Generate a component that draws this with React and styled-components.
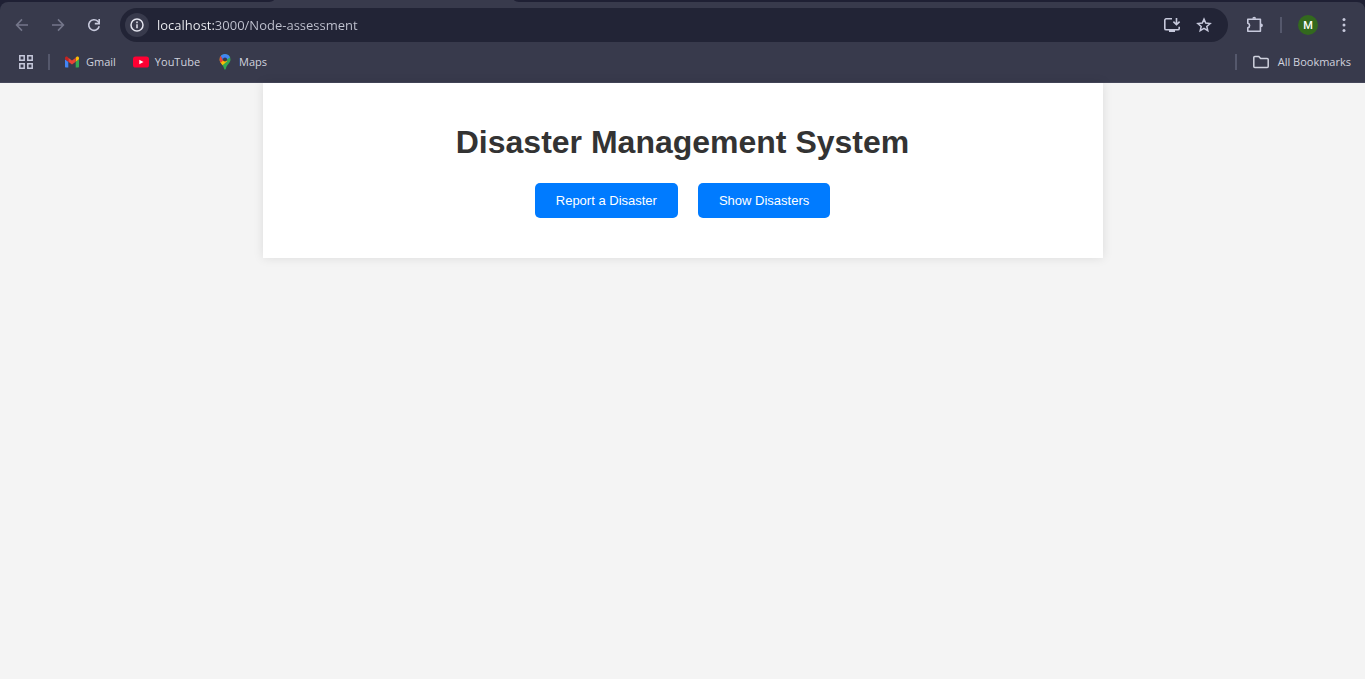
import React from "react";
import styled, { createGlobalStyle } from "styled-components";

const colors = {
  frame: "#1f2034",
  toolbar: "#383a4c",
  omnibox: "#222436",
  chip: "#383a4c",
  divider: "#55586c",
  icon: "#c7c9dc",
  dim: "#74768a",
  text: "#d0d2de",
};

const GlobalStyle = createGlobalStyle`
  *, *::before, *::after { box-sizing: border-box; }
  body { margin: 0; background: #f4f4f4; font-family: "Liberation Sans", Arial, sans-serif; }
  svg { display: block; flex: none; }
`;

const Page = styled.div`
  min-height: 100vh;
`;

const Browser = styled.header`
  background: ${colors.frame};
  font-family: "Segoe UI", "Open Sans", sans-serif;
`;

const TabStrip = styled.div`
  display: flex;
  height: 2px;
  background: ${colors.toolbar};
`;

const TabGap = styled.div`
  background: ${colors.frame};
  width: ${(p) => (p.$fill ? "auto" : "274px")};
  flex: ${(p) => (p.$fill ? "1" : "none")};
  border-radius: ${(p) => (p.$fill ? "0 0 0 8px / 0 0 0 2px" : "0 0 8px 0 / 0 0 2px 0")};
`;

const ActiveTab = styled.div`
  width: 240px;
`;

const Chrome = styled.div`
  background: ${colors.toolbar};
  border-radius: 8px 8px 0 0;
  border-bottom: 1px solid #45475a;
`;

const Toolbar = styled.div`
  display: flex;
  align-items: center;
  height: 46px;
  padding: 0 12px 0 4px;
`;

const IconButton = styled.button`
  display: flex;
  align-items: center;
  justify-content: center;
  width: ${(p) => p.$size || 36}px;
  height: ${(p) => p.$size || 36}px;
  flex: none;
  padding: 0;
  border: 0;
  border-radius: 50%;
  background: ${(p) => (p.$chip ? colors.chip : "transparent")};
  color: ${(p) => (p.$dim ? colors.dim : colors.icon)};
`;

const Omnibox = styled.div`
  display: flex;
  align-items: center;
  flex: 1;
  height: 34px;
  margin: 0 9px 0 8px;
  padding: 0 8px 0 5px;
  border-radius: 17px;
  background: ${colors.omnibox};
`;

const UrlInput = styled.input`
  flex: 1;
  min-width: 0;
  margin-left: 8px;
  padding: 0;
  border: 0;
  outline: 0;
  background: linear-gradient(90deg, #f1f2f6 58px, #c3c5d2 58px);
  background-clip: text;
  -webkit-background-clip: text;
  color: transparent;
  font: 13px/20px "Segoe UI", "Open Sans", sans-serif;
`;

const Divider = styled.span`
  width: 2px;
  height: 16px;
  flex: none;
  margin: ${(p) => p.$margin};
  background: ${colors.divider};
`;

const Avatar = styled.button`
  width: 20px;
  height: 20px;
  flex: none;
  margin: 0 17px 0 16px;
  padding: 0;
  border: 0;
  border-radius: 50%;
  background: #33691e;
  color: #fff;
  font: 500 11px/22px Roboto, sans-serif;
`;

const BookmarkBar = styled.nav`
  display: flex;
  align-items: center;
  height: 34px;
  padding: 0 14px 6px 12px;
`;

const Bookmark = styled.a`
  display: flex;
  align-items: center;
  gap: 6px;
  margin-right: 17px;
  color: ${colors.text};
  font-size: 11px;
  line-height: 16px;
  text-decoration: none;
`;

const AllBookmarks = styled.button`
  display: flex;
  align-items: center;
  gap: 8px;
  padding: 0;
  border: 0;
  background: transparent;
  color: ${colors.text};
  font: 11px/16px "Segoe UI", "Open Sans", sans-serif;
`;

const Spacer = styled.span`
  flex: 1;
`;

const Card = styled.main`
  max-width: 840px;
  margin: 0 auto;
  padding: 40px 20px;
  background: #fff;
  box-shadow: 0 0 10px rgba(0, 0, 0, 0.1);
  text-align: center;
`;

const Title = styled.h1`
  margin: 0 0 22px;
  color: #333;
  font-size: 32px;
  line-height: 38px;
`;

const Actions = styled.div`
  display: flex;
  justify-content: center;
  gap: 20px;
`;

const ActionButton = styled.button`
  padding: 10px 21px;
  border: 0;
  border-radius: 5px;
  background: #007bff;
  color: #fff;
  font: 13px/15px "Liberation Sans", Arial, sans-serif;
  cursor: pointer;
`;

const stroke = { fill: "none", stroke: "currentColor", strokeWidth: 1.6 };

const BackIcon = () => (
  <svg width="16" height="16" viewBox="0 0 16 16" {...stroke}>
    <path d="M14 8H3M8 2.4 2.6 8 8 13.6" />
  </svg>
);
const ForwardIcon = () => (
  <svg width="16" height="16" viewBox="0 0 16 16" {...stroke}>
    <path d="M2 8h11M8 2.4 13.4 8 8 13.6" />
  </svg>
);
const ReloadIcon = () => (
  <svg width="16" height="16" viewBox="0 0 16 16" {...stroke}>
    <path d="M13.2 9.2A5.3 5.3 0 1 1 11.8 4.300L13.200 5.800" />
    <path d="M13.2 2v4.600H8.800" />
  </svg>
);
const InfoIcon = () => (
  <svg width="16" height="16" viewBox="0 0 16 16" fill="none" stroke="#e3e4ee" strokeWidth="1.5">
    <circle cx="8" cy="8" r="6" />
    <path d="M8 7.2v4M8 4.6v1.6" />
  </svg>
);
const InstallIcon = () => (
  <svg width="18" height="18" viewBox="0 0 18 18" {...stroke}>
    <path d="M9 2.8H3.2a1.4 1.4 0 0 0-1.4 1.4v8.2a1.4 1.4 0 0 0 1.4 1.4h11.6a1.4 1.4 0 0 0 1.4-1.4v-1.6" />
    <path d="M13.500 2v6.500M10.400 5.600l3.100 3.100 3.100-3.100" />
    <path d="M6 15h6" strokeWidth="2" />
  </svg>
);
const StarIcon = () => (
  <svg width="16" height="16" viewBox="0 0 16 16" {...stroke} strokeWidth="1.5">
    <path d="m8 2.1 1.7 4 4.4.4-3.3 2.9 1 4.3L8 11.4l-3.8 2.3 1-4.3L1.9 6.5l4.4-.4z" />
  </svg>
);
const PuzzleIcon = () => (
  <svg width="18" height="18" viewBox="0 0 18 18" {...stroke}>
    <path d="M1.800 3.200h12.600v12H1.800v-3.400c2.400-.6 2.400-4 0-4.600z" strokeLinejoin="round" />
    <path d="M6.300 2.800a1.900 2 0 0 1 3.800 0zM14.900 7.400a2 1.900 0 0 1 0 3.800z" fill="currentColor" stroke="none" />
  </svg>
);
const MoreIcon = () => (
  <svg width="16" height="16" viewBox="0 0 16 16" fill="currentColor">
    <circle cx="8" cy="2.5" r="1.5" />
    <circle cx="8" cy="8" r="1.5" />
    <circle cx="8" cy="13.5" r="1.5" />
  </svg>
);
const AppsIcon = () => (
  <svg width="16" height="16" viewBox="0 0 16 16" {...stroke} strokeWidth="1.5">
    <path d="M1.8 1.8h4.4v4.4H1.8zM9.8 1.8h4.4v4.4H9.8zM1.8 9.8h4.4v4.4H1.8zM9.8 9.8h4.4v4.4H9.8z" />
  </svg>
);
const FolderIcon = () => (
  <svg width="18" height="16" viewBox="0 0 18 16" {...stroke} strokeWidth="1.5">
    <path d="M1.8 3.6a1 1 0 0 1 1-1h4l1.8 2h6.6a1 1 0 0 1 1 1v7a1 1 0 0 1-1 1H2.8a1 1 0 0 1-1-1z" />
  </svg>
);
const GmailIcon = () => (
  <svg width="16" height="16" viewBox="0 0 16 16">
    <path fill="#4285f4" d="M2 13.4h2.3V7.8L1 5.3v7.1c0 .6.4 1 1 1z" />
    <path fill="#34a853" d="M11.7 13.4H14c.6 0 1-.4 1-1V5.3l-3.3 2.5z" />
    <path fill="#fbbc04" d="M11.7 3.7v4.1L15 5.3V4c0-1.3-1.4-2-2.4-1.2z" />
    <path fill="#ea4335" d="M4.3 7.8V3.7L8 6.5l3.7-2.8v4.1L8 10.6z" />
    <path fill="#c5221f" d="M1 4v1.3l3.3 2.5V3.7l-.9-.9C2.4 2 1 2.7 1 4z" />
  </svg>
);
const YouTubeIcon = () => (
  <svg width="16" height="16" viewBox="0 0 16 16">
    <rect x="0" y="2.4" width="16" height="11.2" rx="2.6" fill="#ff0033" />
    <path d="m6.3 5.7 4.2 2.3-4.2 2.3z" fill="#fff" />
  </svg>
);
const MapsIcon = () => (
  <svg width="16" height="16" viewBox="0 0 16 16">
    <defs>
      <clipPath id="pin">
        <path d="M8 0a5.5 5.5 0 0 1 5.5 5.5c0 3.6-3.6 4.7-4.6 9.1-.3 1.4-1.5 1.4-1.8 0C6.1 10.2 2.5 9.1 2.5 5.5A5.5 5.5 0 0 1 8 0z" />
      </clipPath>
    </defs>
    <g clipPath="url(#pin)">
      <path fill="#34a853" d="M0 0h16v16H0z" />
      <path fill="#fbbc04" d="M2 9.8 8 3l2.2 4.2L4.6 12z" />
      <path fill="#ea4335" d="M1 1.5h3L8 5 3 9.6H1z" />
      <path fill="#1a73e8" d="M3.6 1.8 7 5l-1 1.2z" />
      <path fill="#4285f4" d="M3.5 0H12l1 3.2L8 7 3.8 2z" />
    </g>
    <circle cx="8" cy="5.5" r="2.1" fill="#383a4c" />
  </svg>
);

export default function App() {
  return (
    <Page>
      <GlobalStyle />
      <Browser>
        <TabStrip>
          <TabGap />
          <ActiveTab />
          <TabGap $fill />
        </TabStrip>
        <Chrome>
          <Toolbar>
            <IconButton $dim aria-label="Back"><BackIcon /></IconButton>
            <IconButton $dim aria-label="Forward"><ForwardIcon /></IconButton>
            <IconButton aria-label="Reload"><ReloadIcon /></IconButton>
            <Omnibox>
              <IconButton $size={24} $chip aria-label="Site information"><InfoIcon /></IconButton>
              <UrlInput aria-label="Address" defaultValue="localhost:3000/Node-assessment" />
              <IconButton $size={32} aria-label="Install app"><InstallIcon /></IconButton>
              <IconButton $size={32} aria-label="Bookmark this page"><StarIcon /></IconButton>
            </Omnibox>
            <IconButton aria-label="Extensions"><PuzzleIcon /></IconButton>
            <Divider $margin="0 0 0 7px" />
            <Avatar aria-label="Profile">M</Avatar>
            <IconButton $size={18} aria-label="Menu"><MoreIcon /></IconButton>
          </Toolbar>
          <BookmarkBar aria-label="Bookmarks">
            <IconButton $size={28} aria-label="Apps"><AppsIcon /></IconButton>
            <Divider $margin="0 14px 0 8px" />
            <Bookmark href="#gmail"><GmailIcon />Gmail</Bookmark>
            <Bookmark href="#youtube"><YouTubeIcon />YouTube</Bookmark>
            <Bookmark href="#maps"><MapsIcon />Maps</Bookmark>
            <Spacer />
            <Divider $margin="0 15px 0 0" />
            <AllBookmarks><FolderIcon />All Bookmarks</AllBookmarks>
          </BookmarkBar>
        </Chrome>
      </Browser>
      <Card>
        <Title>Disaster Management System</Title>
        <Actions>
          <ActionButton>Report a Disaster</ActionButton>
          <ActionButton>Show Disasters</ActionButton>
        </Actions>
      </Card>
    </Page>
  );
}
